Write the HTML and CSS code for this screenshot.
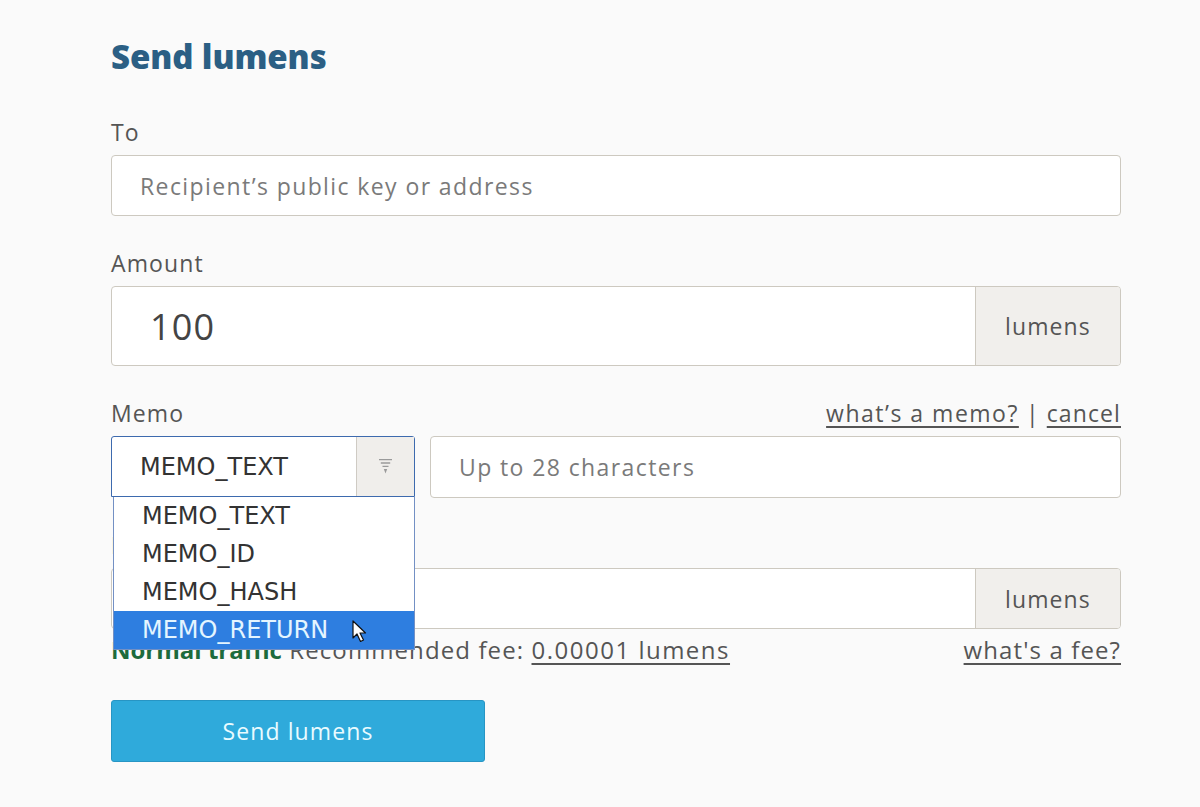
FILE: index.html
```html
<!DOCTYPE html>
<html lang="en">
<head>
    <meta charset="UTF-8">
    <meta name="viewport" content="width=device-width, initial-scale=1.0">
    <title>Send lumens</title>
    <link rel="stylesheet" href="styles.css">
</head>
<body>
    <main class="send-form">
        <h1 class="title">Send lumens</h1>

        <!-- Recipient -->
        <div class="field field-first">
            <div class="field-label">To</div>
            <input type="text" class="text-input" placeholder="Recipient’s public key or address">
        </div>

        <!-- Amount -->
        <div class="field">
            <div class="field-label">Amount</div>
            <div class="input-group amount">
                <input type="text" class="group-input amount-input" value="100">
                <div class="addon">lumens</div>
            </div>
        </div>

        <!-- Memo -->
        <div class="field">
            <div class="field-label">
                <span>Memo</span>
                <span class="label-links"><a href="#">what’s a memo?</a> | <a href="#">cancel</a></span>
            </div>
            <div class="memo-row">
                <div class="select-wrap">
                    <div class="select-box">
                        <span class="select-value">MEMO_TEXT</span>
                        <span class="select-arrow">
                            <svg width="13" height="15" viewBox="0 0 13 15">
                                <path d="M0 0.6H13M1.8 4H11.2M3.5 7.4H9.5" stroke="#9a9a9a" stroke-width="1.3" fill="none"/>
                                <path d="M4.8 10H8.2L6.5 14.5Z" fill="#9a9a9a"/>
                            </svg>
                        </span>
                    </div>
                    <ul class="select-list">
                        <li>MEMO_TEXT</li>
                        <li>MEMO_ID</li>
                        <li>MEMO_HASH</li>
                        <li class="active">MEMO_RETURN
                            <svg class="cursor" width="16" height="24" viewBox="0 0 16 24">
                                <path d="M1 1V18L5 14L8.5 21.5L11.5 20L8 13H13.5Z" fill="#fff" stroke="#111" stroke-width="1.2" stroke-linejoin="round"/>
                            </svg>
                        </li>
                    </ul>
                </div>
                <input type="text" class="text-input memo-input" placeholder="Up to 28 characters">
            </div>
        </div>

        <!-- Fee -->
        <div class="field">
            <div class="field-label">Network fee</div>
            <div class="input-group fee">
                <input type="text" class="group-input" value="">
                <div class="addon">lumens</div>
            </div>
            <div class="fee-info">
                <span><b class="traffic">Normal traffic</b> Recommended fee: <a href="#">0.00001 lumens</a></span>
                <a href="#">what's a fee?</a>
            </div>
        </div>

        <button class="send-btn">Send lumens</button>
    </main>
</body>
</html>
```

FILE: styles.css
```css
body {
    margin: 0;
    background-color: #fafafa;
    font-family: "Open Sans", Arial, sans-serif;
    color: #555;
}
.send-form {
    width: 1010px;
    padding: 37px 0 0 111px;
}
.title {
    margin: 0;
    font-size: 33px;
    line-height: 40px;
    font-weight: 800;
    color: #2b5f84;
    letter-spacing: -0.1px;
}
.field {
    margin-top: 32px;
}
.field-first {
    margin-top: 40px;
}
.field-label {
    display: flex;
    justify-content: space-between;
    font-size: 23px;
    letter-spacing: 1.1px;
    line-height: 30px;
    margin-bottom: 8px;
}
.label-links a:first-child {
    letter-spacing: 1.5px;
}
a {
    color: #555;
    text-decoration: underline;
    text-underline-offset: 4px;
}
.text-input {
    box-sizing: border-box;
    width: 100%;
    height: 61px;
    padding: 0 28px;
    border: 1px solid #cdc9c0;
    border-radius: 4px;
    background-color: #fff;
    font-family: "Open Sans", Arial, sans-serif;
    font-size: 23px;
    letter-spacing: 1.4px;
    color: #444;
}
.text-input::placeholder {
    color: #7a7a7a;
}
.input-group {
    display: flex;
    box-sizing: border-box;
    height: 61px;
    border: 1px solid #cdc9c0;
    border-radius: 4px;
    background-color: #fff;
    overflow: hidden;
}
.input-group.amount {
    height: 80px;
}
.group-input {
    flex: 1;
    min-width: 0;
    border: none;
    background: transparent;
    padding: 0 0 0 38px;
    font-family: "Open Sans", Arial, sans-serif;
    font-size: 23px;
    color: #444;
}
.amount-input {
    font-size: 36px;
    letter-spacing: 1.2px;
}
.addon {
    width: 144px;
    display: flex;
    align-items: center;
    justify-content: center;
    border-left: 1px solid #cdc9c0;
    background-color: #f1efec;
    font-size: 23px;
    letter-spacing: 1.1px;
    color: #555;
}
.memo-row {
    display: flex;
    gap: 15px;
}
.select-wrap {
    position: relative;
    width: 304px;
    flex-shrink: 0;
}
.select-box {
    display: flex;
    box-sizing: border-box;
    height: 61px;
    border: 1px solid #3d6aae;
    border-radius: 3px 3px 0 0;
    background-color: #fff;
}
.select-value {
    flex: 1;
    display: flex;
    align-items: center;
    padding-left: 28px;
    font-family: "DejaVu Sans", Verdana, sans-serif;
    font-size: 24px;
    color: #333;
}
.select-arrow {
    width: 57px;
    display: flex;
    align-items: center;
    justify-content: center;
    border-left: 1px solid #cfcbc4;
    background-color: #f0eeeb;
}
.select-list {
    position: absolute;
    top: 61px;
    left: 2px;
    right: 0;
    z-index: 2;
    margin: 0;
    padding: 0;
    list-style: none;
    background-color: #fff;
    border: 1px solid #7390c4;
    border-top: none;
}
.select-list li {
    position: relative;
    height: 38px;
    line-height: 38px;
    padding-left: 28px;
    font-family: "DejaVu Sans", Verdana, sans-serif;
    font-size: 24px;
    color: #333;
}
.select-list li.active {
    background-color: #2e7ee0;
    color: #e4f5ff;
}
.cursor {
    position: absolute;
    left: 238px;
    top: 9px;
}
.memo-input {
    flex: 1;
    height: 62px;
}
.fee-info {
    display: flex;
    justify-content: space-between;
    margin-top: 6px;
    font-size: 24px;
    letter-spacing: 1.1px;
    line-height: 30px;
}
.fee-info span a {
    letter-spacing: 1.5px;
}
.traffic {
    color: #1d6b3c;
    font-weight: 700;
    letter-spacing: 0;
}
.send-btn {
    margin-top: 35px;
    width: 374px;
    height: 62px;
    border: 1px solid #2795c4;
    border-radius: 3px;
    background-color: #2faadb;
    color: #e9fbff;
    font-family: "Open Sans", Arial, sans-serif;
    font-size: 23px;
    letter-spacing: 1.1px;
    cursor: pointer;
}
```
